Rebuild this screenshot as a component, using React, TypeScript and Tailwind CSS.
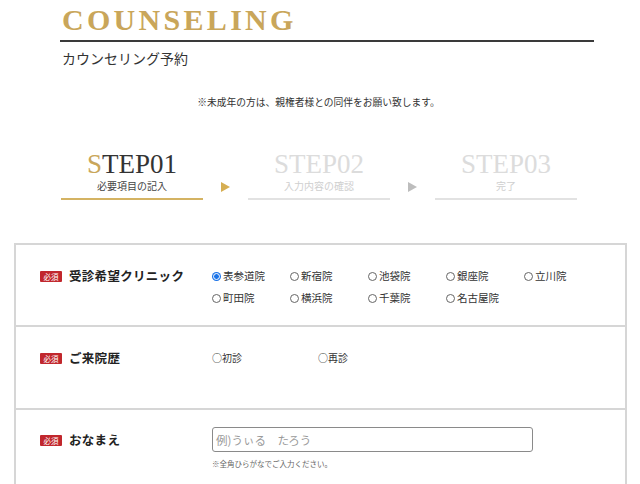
import React from "react";

const jp = "font-['Noto_Sans_CJK_JP','Noto_Sans_CJK_JP',sans-serif]";
const serif = "font-['Liberation_Serif',serif]";

function Radio({ label, checked }: { label: string; checked?: boolean }) {
  return (
    <div className="flex items-center h-[22px]">
      {checked ? (
        <span className="w-[9px] h-[9px] rounded-full bg-[#1a73e8] flex items-center justify-center">
          <span className="w-[7px] h-[7px] rounded-full border border-white bg-[#1a73e8]" />
        </span>
      ) : (
        <span className="w-[9px] h-[9px] rounded-full border border-[#666] bg-white" />
      )}
      <span className="ml-[2px] text-[10.5px] leading-[12px] text-[#333]">{label}</span>
    </div>
  );
}

function Badge() {
  return (
    <span className="w-[22px] h-[11px] bg-[#c1272d] rounded-[1px] text-white text-[7.5px] leading-[11px] flex items-center justify-center shrink-0">
      必須
    </span>
  );
}

function Label({ text }: { text: string }) {
  return (
    <div className="w-[196px] pl-[24px] flex items-center h-[16px] shrink-0">
      <Badge />
      <span className="ml-[7px] text-[12.5px] leading-[16px] font-bold text-[#222] tracking-[0.3px]">{text}</span>
    </div>
  );
}

function Step({
  num,
  sub,
  active,
}: {
  num: string;
  sub: string;
  active?: boolean;
}) {
  return (
    <div className="w-[142px] flex flex-col items-center">
      <div className={`${serif} text-[27px] leading-[26px] ${active ? "text-[#333]" : "text-[#dcdcdc]"}`}>
        {active ? <span className="text-[#c9a65a]">S</span> : "S"}TEP{num}
      </div>
      <div className={`mt-[3px] text-[10px] leading-[12px] ${active ? "text-[#444]" : "text-[#cfcfcf]"}`}>{sub}</div>
      <div className={`mt-[6px] w-[142px] h-[2px] ${active ? "bg-[#d4b363]" : "bg-[#e2e2e2]"}`} />
    </div>
  );
}

function Arrow({ color }: { color: string }) {
  return (
    <div className="w-[45px] flex justify-center pt-[31px]">
      <svg width="9" height="10" viewBox="0 0 9 10">
        <polygon points="0,0 9,5 0,10" fill={color} />
      </svg>
    </div>
  );
}

export default function App() {
  const clinics: [string, boolean][] = [
    ["表参道院", true],
    ["新宿院", false],
    ["池袋院", false],
    ["銀座院", false],
    ["立川院", false],
    ["町田院", false],
    ["横浜院", false],
    ["千葉院", false],
    ["名古屋院", false],
  ];
  return (
    <div className={`w-[640px] min-h-[484px] bg-white ${jp} text-[#333]`}>
      <div className="pl-[60px] pt-[5px]">
        <h1 className={`${serif} pl-[2px] text-[30px] leading-[30px] font-bold tracking-[3.3px] text-[#c9a65a]`}>COUNSELING</h1>
        <div className="mt-[5px] w-[534px] h-[2px] bg-[#3a3a3a]" />
        <p className="mt-[6px] pl-[2px] text-[14px] leading-[20px] text-[#333]">カウンセリング予約</p>
      </div>

      <p className="mt-[27px] text-center text-[9.75px] leading-[14px] text-[#333] pr-[3px]">
        ※未成年の方は、親権者様との同伴をお願い致します。
      </p>

      <div className="mt-[42px] pl-[61px] flex">
        <Step num="01" sub="必要項目の記入" active />
        <Arrow color="#d6ae52" />
        <Step num="02" sub="入力内容の確認" />
        <Arrow color="#bdbdbd" />
        <Step num="03" sub="完了" />
      </div>

      <div className="mt-[43px] ml-[14px] w-[613px] border-2 border-b-0 border-[#d6d6d6]">
        <div className="h-[82px] border-b-2 border-[#d6d6d6] flex items-start pt-[23px]">
          <Label text="受診希望クリニック" />
          <div className="grid grid-cols-[78px_78px_78px_78px_78px] -mt-[3px]">
            {clinics.map(([c, ch]) => (
              <Radio key={c} label={c} checked={ch} />
            ))}
          </div>
        </div>
        <div className="h-[83px] border-b-2 border-[#d6d6d6] flex items-start pt-[23px]">
          <Label text="ご来院歴" />
          <div className="flex text-[10px] leading-[16px] text-[#333]">
            <span className="w-[106px]">○初診</span>
            <span>○再診</span>
          </div>
        </div>
        <div className="h-[80px] flex items-start pt-[17px]">
          <div className="pt-[5px]">
            <Label text="おなまえ" />
          </div>
          <div className="flex flex-col">
            <div className="w-[321px] h-[25px] border border-[#8a8a8a] rounded-[3px] flex items-center pl-[3px]">
              <span className="text-[11.5px] text-[#9a9a9a] leading-[14px]">例)うぃる　たろう</span>
            </div>
            <p className="mt-[7px] text-[7.5px] leading-[10px] text-[#666]">※全角ひらがなでご入力ください。</p>
          </div>
        </div>
      </div>
    </div>
  );
}
